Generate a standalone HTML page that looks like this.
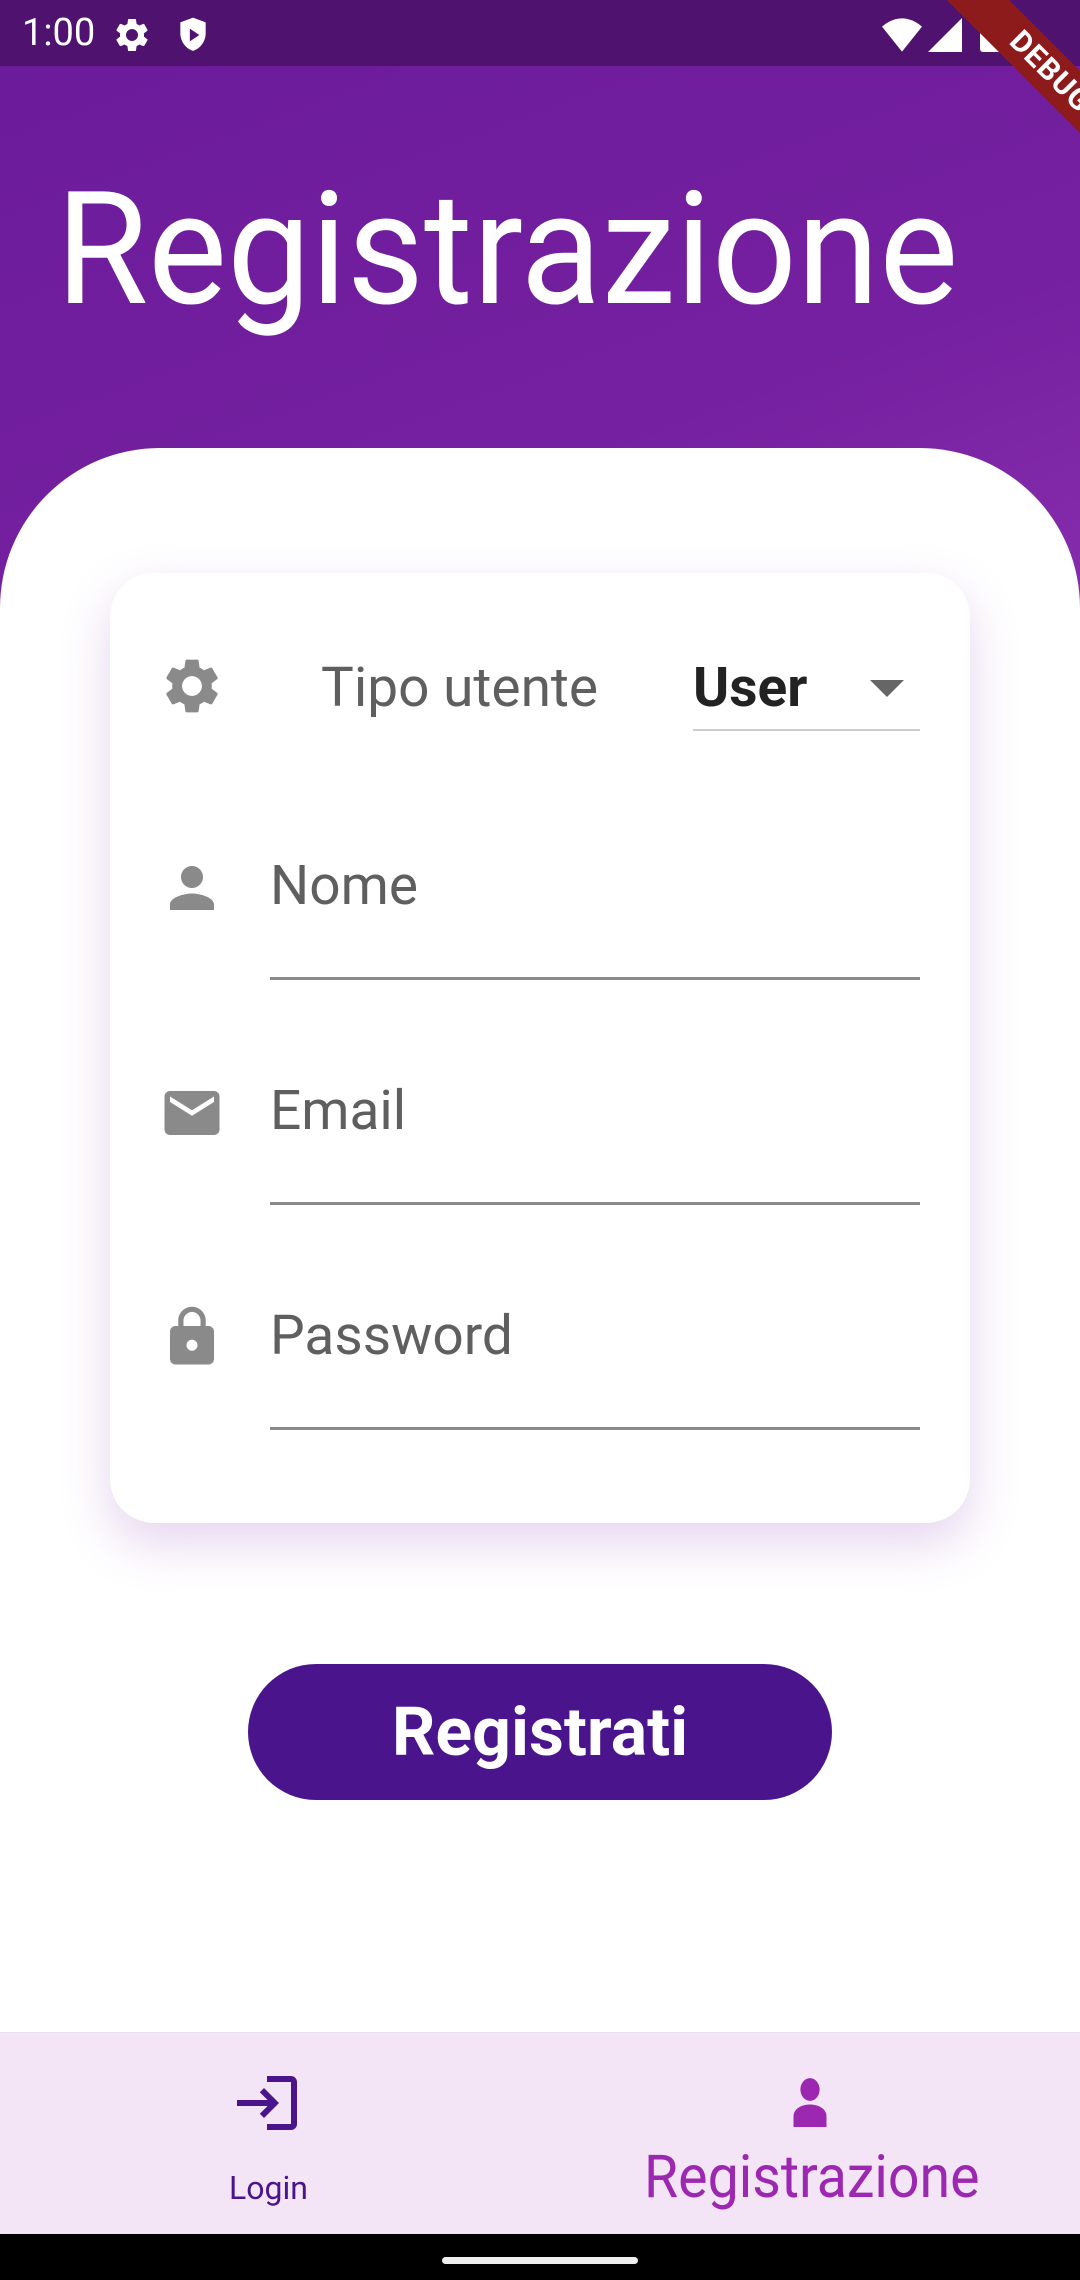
<!DOCTYPE html>
<html><head><meta charset="utf-8"><style>
*{margin:0;padding:0;box-sizing:border-box}
html,body{width:1080px;height:2280px;overflow:hidden}
body{position:relative;background:#fff;font-family:"Roboto","Liberation Sans",sans-serif}
.a{position:absolute;white-space:nowrap;line-height:1}
svg.i{position:absolute;width:66px;height:66px}
</style></head><body>
<div class="a" style="left:0;top:0;width:1080px;height:700px;background:linear-gradient(160deg,#6a1b9a 0%,#7520a0 60%,#8a30b0 100%)"></div>
<div class="a" style="left:0;top:0;width:1080px;height:66px;background:#4f136f"></div>
<div class="a" style="left:22px;top:14px;font-size:38px;color:#fff">1:00</div>
<svg class="a" style="left:112px;top:15px" width="40" height="40" viewBox="0 0 24 24"><path fill="#fff" d="M19.14 12.94c.04-.3.06-.61.06-.94 0-.32-.02-.64-.07-.94l2.03-1.58c.18-.14.23-.41.12-.61l-1.92-3.32c-.12-.22-.37-.29-.59-.22l-2.39.96c-.5-.38-1.03-.7-1.62-.94l-.36-2.54c-.04-.24-.24-.41-.48-.41h-3.84c-.24 0-.43.17-.47.41l-.36 2.54c-.59.24-1.130.57-1.62.94l-2.39-.96c-.22-.08-.47 0-.59.22L2.74 8.87c-.12.21-.08.47.12.61l2.03 1.58c-.05.3-.09.63-.09.94s.02.64.07.94l-2.03 1.58c-.18.14-.23.41-.12.61l1.92 3.32c.12.22.37.29.59.22l2.39-.96c.5.38 1.03.7 1.62.94l.36 2.54c.05.24.24.41.48.41h3.84c.24 0 .44-.17.47-.41l.36-2.54c.59-.24 1.13-.56 1.62-.94l2.39.96c.22.08.47 0 .59-.22l1.92-3.32c.12-.22.07-.47-.12-.61l-2.01-1.58zM12 15.6c-1.98 0-3.6-1.62-3.6-3.6s1.62-3.6 3.6-3.6 3.6 1.62 3.6 3.6-1.62 3.6-3.6 3.6z"/></svg>
<svg class="a" style="left:176px;top:16px" width="34" height="38" viewBox="0 0 20 24"><path fill="#fff" d="M10 1L2 4v7c0 5 3.4 9.7 8 11 4.6-1.3 8-6 8-11V4z"/><path fill="#4f136f" d="M8 8v8l6-4z"/></svg>
<svg class="a" style="left:882px;top:18px" width="40" height="34" viewBox="0 0 24 20"><path fill="#fff" d="M12 20L0 5C3.5 2 7.5 0 12 0s8.5 2 12 5z"/></svg>
<svg class="a" style="left:928px;top:18px" width="34" height="34" viewBox="0 0 20 20"><path fill="#fff" d="M20 0v20H0z"/></svg>
<div class="a" style="left:980px;top:16px;width:22px;height:36px;background:#fff;border-radius:3px"></div>
<div class="a" style="left:900px;top:50px;width:300px;height:44px;background:#8e1b1b;transform:rotate(45deg);transform-origin:center;color:#fff;font-weight:bold;font-size:30px;text-align:center;line-height:44px;letter-spacing:1px">DEBUG</div>
<div class="a" style="left:56px;top:172px;font-size:157px;color:#fff;transform:scaleX(0.95);transform-origin:left">Registrazione</div>
<div class="a" style="left:0;top:448px;width:1080px;height:1832px;background:#fff;border-radius:160px 160px 0 0"></div>
<div class="a" style="left:110px;top:573px;width:860px;height:950px;background:#fff;border-radius:44px;box-shadow:0 20px 50px rgba(140,60,180,0.22)"></div>
<svg class="i" style="left:159px;top:653px" viewBox="0 0 24 24"><path fill="#8a8a8a" d="M19.14 12.94c.04-.3.06-.61.06-.94 0-.32-.02-.64-.07-.94l2.03-1.58c.18-.14.23-.41.12-.61l-1.92-3.32c-.12-.22-.37-.29-.59-.22l-2.39.96c-.5-.38-1.03-.7-1.62-.94l-.36-2.54c-.04-.24-.24-.41-.48-.41h-3.84c-.24 0-.43.17-.47.41l-.36 2.54c-.59.24-1.13.57-1.62.94l-2.39-.96c-.22-.08-.47 0-.59.22L2.74 8.87c-.12.21-.08.47.12.61l2.03 1.58c-.05.3-.09.63-.09.94s.02.64.07.94l-2.03 1.58c-.18.14-.23.41-.12.61l1.92 3.32c.12.22.37.29.59.22l2.39-.96c.5.38 1.03.7 1.62.94l.36 2.54c.05.24.24.41.48.41h3.84c.24 0 .44-.17.47-.41l.36-2.54c.59-.24 1.13-.56 1.62-.94l2.39.96c.22.08.47 0 .59-.22l1.92-3.32c.12-.22.07-.47-.12-.61l-2.01-1.58zM12 15.6c-1.98 0-3.6-1.62-3.6-3.6s1.62-3.6 3.6-3.6 3.6 1.62 3.6 3.6-1.62 3.6-3.6 3.6z"/></svg>
<div class="a" style="left:321px;top:661px;font-size:55px;color:#5f5f5f">Tipo utente</div>
<div class="a" style="left:693px;top:661px;font-size:55px;font-weight:bold;color:#222">User</div>
<svg class="a" style="left:870px;top:680px" width="34" height="17" viewBox="0 0 10 5"><path fill="#666" d="M0 0h10L5 5z"/></svg>
<div class="a" style="left:693px;top:729px;width:227px;height:2px;background:#ccc"></div>
<svg class="i" style="left:159px;top:855px" viewBox="0 0 24 24"><path fill="#8a8a8a" d="M12 12c2.21 0 4-1.79 4-4s-1.79-4-4-4-4 1.79-4 4 1.79 4 4 4zm0 2c-2.67 0-8 1.34-8 4v2h16v-2c0-2.66-5.33-4-8-4z"/></svg>
<div class="a" style="left:270px;top:859px;font-size:55px;color:#5f5f5f">Nome</div>
<div class="a" style="left:270px;top:977px;width:650px;height:3px;background:#8a8a8a"></div>
<svg class="i" style="left:159px;top:1080px" viewBox="0 0 24 24"><path fill="#8a8a8a" d="M20 4H4c-1.1 0-1.99.9-1.99 2L2 18c0 1.1.9 2 2 2h16c1.1 0 2-.9 2-2V6c0-1.1-.9-2-2-2zm0 4l-8 5-8-5V6l8 5 8-5v2z"/></svg>
<div class="a" style="left:270px;top:1084px;font-size:55px;color:#5f5f5f">Email</div>
<div class="a" style="left:270px;top:1202px;width:650px;height:3px;background:#8a8a8a"></div>
<svg class="i" style="left:159px;top:1304px" viewBox="0 0 24 24"><path fill="#8a8a8a" d="M18 8h-1V6c0-2.76-2.24-5-5-5S7 3.24 7 6v2H6c-1.1 0-2 .9-2 2v10c0 1.1.9 2 2 2h12c1.1 0 2-.9 2-2V10c0-1.1-.9-2-2-2zm-6 9c-1.1 0-2-.9-2-2s.9-2 2-2 2 .9 2 2-.9 2-2 2zm3.1-9H8.9V6c0-1.71 1.39-3.1 3.1-3.1 1.71 0 3.1 1.39 3.1 3.1v2z"/></svg>
<div class="a" style="left:270px;top:1309px;font-size:55px;color:#5f5f5f">Password</div>
<div class="a" style="left:270px;top:1427px;width:650px;height:3px;background:#8a8a8a"></div>
<div class="a" style="left:248px;top:1664px;width:584px;height:136px;background:#4a148c;border-radius:68px;color:#fff;font-weight:bold;font-size:68px;line-height:136px;text-align:center">Registrati</div>
<div class="a" style="left:0;top:2032px;width:1080px;height:202px;background:#f3e5f5;border-top:1px solid #e8e0ea"></div>
<svg class="i" style="left:231px;top:2067px;width:72px;height:72px" viewBox="0 0 24 24"><path fill="#4a148c" d="M11 7L9.6 8.4l2.6 2.6H2v2h10.2l-2.6 2.6L11 17l5-5-5-5zm9 12h-8v2h8c1.1 0 2-.9 2-2V5c0-1.1-.9-2-2-2h-8v2h8v14z"/></svg>
<div class="a" style="left:229px;top:2172px;font-size:32px;color:#4a148c">Login</div>
<svg class="i" style="left:774px;top:2067px;width:72px;height:72px" viewBox="0 0 24 24"><ellipse cx="12" cy="7.5" rx="3.2" ry="3.8" fill="#9c27b0"/><path fill="#9c27b0" d="M6.5 20v-3.5c0-2.5 2.5-4 5.5-4s5.5 1.5 5.5 4V20z"/></svg>
<div class="a" style="left:644px;top:2148px;font-size:59px;color:#9c27b0;transform:scaleX(0.94);transform-origin:left">Registrazione</div>
<div class="a" style="left:0;top:2234px;width:1080px;height:46px;background:#000"></div>
<div class="a" style="left:442px;top:2257px;width:196px;height:7px;background:#eee;border-radius:4px"></div>
</body></html>
